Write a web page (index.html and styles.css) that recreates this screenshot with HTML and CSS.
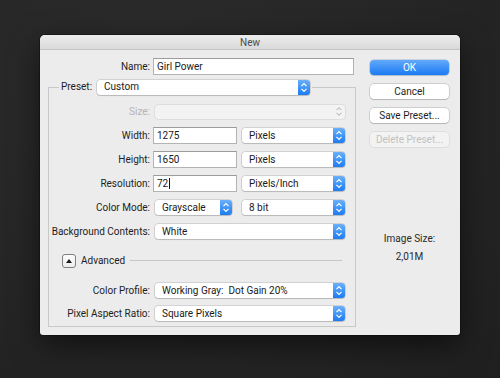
FILE: index.html
```html
<!DOCTYPE html>
<html lang="en">
<head>
    <meta charset="UTF-8">
    <title>New</title>
    <link rel="stylesheet" href="styles.css">
</head>
<body>
<div class="stage">
    <div class="dialog">
        <div class="dialog--title">New</div>

        <div class="dialog--content">
            <div class="dialog--main">

                <div class="row">
                    <span class="label label-name">Name:</span>
                    <div class="field field-name">Girl Power</div>
                </div>

                <div class="group">
                    <div class="group--head">
                        <span class="group--line group--line-left"></span>
                        <span class="group--title">Preset:</span>
                        <div class="popup popup-preset">
                            <span class="popup--value">Custom</span>
                            <span class="popup--stepper"><svg viewBox="0 0 12 15" width="12" height="15"><path d="M3.5 6.2 L6 3.7 L8.5 6.2 M3.5 8.8 L6 11.3 L8.5 8.8"/></svg></span>
                        </div>
                        <span class="group--line"></span>
                    </div>

                    <div class="row row-size">
                        <span class="label label-disabled">Size:</span>
                        <div class="popup popup-full popup-disabled">
                            <span class="popup--value"></span>
                            <span class="popup--stepper"><svg viewBox="0 0 12 15" width="12" height="15"><path d="M3.5 6.2 L6 3.7 L8.5 6.2 M3.5 8.8 L6 11.3 L8.5 8.8"/></svg></span>
                        </div>
                    </div>

                    <div class="row">
                        <span class="label">Width:</span>
                        <div class="field field-num">1275</div>
                        <div class="popup popup-unit">
                            <span class="popup--value">Pixels</span>
                            <span class="popup--stepper"><svg viewBox="0 0 12 15" width="12" height="15"><path d="M3.5 6.2 L6 3.7 L8.5 6.2 M3.5 8.8 L6 11.3 L8.5 8.8"/></svg></span>
                        </div>
                    </div>

                    <div class="row">
                        <span class="label">Height:</span>
                        <div class="field field-num">1650</div>
                        <div class="popup popup-unit">
                            <span class="popup--value">Pixels</span>
                            <span class="popup--stepper"><svg viewBox="0 0 12 15" width="12" height="15"><path d="M3.5 6.2 L6 3.7 L8.5 6.2 M3.5 8.8 L6 11.3 L8.5 8.8"/></svg></span>
                        </div>
                    </div>

                    <div class="row">
                        <span class="label">Resolution:</span>
                        <div class="field field-num">72<span class="caret"></span></div>
                        <div class="popup popup-unit">
                            <span class="popup--value">Pixels/Inch</span>
                            <span class="popup--stepper"><svg viewBox="0 0 12 15" width="12" height="15"><path d="M3.5 6.2 L6 3.7 L8.5 6.2 M3.5 8.8 L6 11.3 L8.5 8.8"/></svg></span>
                        </div>
                    </div>

                    <div class="row">
                        <span class="label">Color Mode:</span>
                        <div class="popup popup-mode">
                            <span class="popup--value">Grayscale</span>
                            <span class="popup--stepper"><svg viewBox="0 0 12 15" width="12" height="15"><path d="M3.5 6.2 L6 3.7 L8.5 6.2 M3.5 8.8 L6 11.3 L8.5 8.8"/></svg></span>
                        </div>
                        <div class="popup popup-unit popup-bits">
                            <span class="popup--value">8 bit</span>
                            <span class="popup--stepper"><svg viewBox="0 0 12 15" width="12" height="15"><path d="M3.5 6.2 L6 3.7 L8.5 6.2 M3.5 8.8 L6 11.3 L8.5 8.8"/></svg></span>
                        </div>
                    </div>

                    <div class="row">
                        <span class="label">Background Contents:</span>
                        <div class="popup popup-full">
                            <span class="popup--value">White</span>
                            <span class="popup--stepper"><svg viewBox="0 0 12 15" width="12" height="15"><path d="M3.5 6.2 L6 3.7 L8.5 6.2 M3.5 8.8 L6 11.3 L8.5 8.8"/></svg></span>
                        </div>
                    </div>

                    <div class="row row-advanced">
                        <span class="disclosure"><span class="disclosure--arrow"></span></span>
                        <span class="advanced--title">Advanced</span>
                        <span class="advanced--line"></span>
                    </div>

                    <div class="row row-profile">
                        <span class="label">Color Profile:</span>
                        <div class="popup popup-full">
                            <span class="popup--value">Working Gray:&nbsp; Dot Gain 20%</span>
                            <span class="popup--stepper"><svg viewBox="0 0 12 15" width="12" height="15"><path d="M3.5 6.2 L6 3.7 L8.5 6.2 M3.5 8.8 L6 11.3 L8.5 8.8"/></svg></span>
                        </div>
                    </div>

                    <div class="row row-aspect">
                        <span class="label">Pixel Aspect Ratio:</span>
                        <div class="popup popup-full">
                            <span class="popup--value">Square Pixels</span>
                            <span class="popup--stepper"><svg viewBox="0 0 12 15" width="12" height="15"><path d="M3.5 6.2 L6 3.7 L8.5 6.2 M3.5 8.8 L6 11.3 L8.5 8.8"/></svg></span>
                        </div>
                    </div>
                </div>
            </div>

            <div class="dialog--side">
                <button class="btn btn-default">OK</button>
                <button class="btn">Cancel</button>
                <button class="btn">Save Preset...</button>
                <button class="btn btn-disabled">Delete Preset...</button>

                <div class="imagesize">
                    <div class="imagesize--label">Image Size:</div>
                    <div class="imagesize--value">2,01M</div>
                </div>
            </div>
        </div>
    </div>
</div>
</body>
</html>
```

FILE: styles.css
```css
*, *:before, *:after {
    box-sizing: border-box;
    padding: 0;
    margin: 0;
}

body {
    background: radial-gradient(ellipse at 30% 20%, #2b2b2b 0%, #252525 60%, #1f1f1f 100%);
    height: 378px;
    overflow: hidden;
    font-family: Roboto, "Liberation Sans", Arial, sans-serif;
    font-size: 10px;
    line-height: 1;
    color: #222;
}

.stage {
    padding: 35px 0 0 40px;
}

.dialog {
    width: 420px;
    height: 300px;
    background: #ececec;
    border-radius: 5px 5px 3px 3px;
    overflow: hidden;
    box-shadow: 0 10px 30px rgba(0, 0, 0, 0.55), 0 0 0 1px rgba(0, 0, 0, 0.3);
}

.dialog--title {
    height: 15px;
    line-height: 15px;
    text-align: center;
    color: #4c4c4c;
    background: linear-gradient(#ececec, #dadada);
    border-bottom: 1px solid #c4c4c4;
}

.dialog--content {
    display: flex;
}

.dialog--main {
    width: 316px;
    padding: 8px 0 0 8px;
}

.row {
    display: flex;
    align-items: center;
    height: 17px;
}

.label {
    flex: none;
    width: 101px;
    text-align: right;
    color: #1e1e1e;
}

.label-name {
    width: 102px;
}

.label-disabled {
    color: #b4b4b4;
}

/* text fields */
.field {
    height: 17px;
    margin-left: 3px;
    padding: 0 3px;
    display: flex;
    align-items: center;
    background: #fff;
    border: 1px solid #b3b3b3;
    border-top-color: #9c9c9c;
    color: #1a1a1a;
}

.field-name {
    width: 201px;
}

.field-num {
    width: 84px;
}

.caret {
    display: inline-block;
    width: 1px;
    height: 11px;
    background: #111;
    margin-left: 1px;
}

/* popup buttons */
.popup {
    height: 15px;
    margin-left: 5px;
    padding-left: 7px;
    display: flex;
    align-items: center;
    background: #fff;
    border-radius: 3px;
    box-shadow: 0 0 0 0.5px rgba(0, 0, 0, 0.22), 0 1px 1px rgba(0, 0, 0, 0.12);
    color: #1a1a1a;
}

.popup--value {
    flex: 1;
    white-space: nowrap;
    overflow: hidden;
}

.popup--stepper {
    flex: none;
    width: 12px;
    height: 15px;
    border-radius: 0 3px 3px 0;
    background: linear-gradient(#6bb0fa, #1c7bf2);
}

.popup--stepper svg {
    display: block;
    fill: none;
    stroke: #fff;
    stroke-width: 1.2;
}

.popup-full {
    width: 190px;
}

.popup-unit {
    width: 103px;
}

.popup-mode {
    width: 77px;
}

.popup-bits {
    margin-left: 10px;
}

.popup-preset {
    width: 213px;
    margin-left: 5px;
}

.popup-disabled {
    height: 14px;
    background: #f3f3f3;
    box-shadow: 0 0 0 0.5px rgba(0, 0, 0, 0.12);
}

.popup-disabled .popup--stepper {
    background: transparent;
}

.popup-disabled .popup--stepper svg {
    stroke: #a8a8a8;
    stroke-width: 1;
}

/* preset group box */
.group {
    margin-top: 12px;
    border: 1px solid #c9c9c9;
    border-top: none;
    padding-bottom: 4px;
    display: flex;
    flex-direction: column;
    gap: 7px;
}

.group--head {
    display: flex;
    align-items: center;
    height: 14px;
    margin: -7px -1px 0 -1px;
}

.group--line {
    flex: 1;
    height: 1px;
    background: #c9c9c9;
    margin-left: 2px;
}

.group--line-left {
    flex: none;
    width: 11px;
    margin: 0 2px 0 0;
}

.group--title {
    color: #1e1e1e;
}

.row-size {
    margin-top: 2px;
}

/* advanced disclosure */
.row-advanced {
    margin-top: 5px;
    padding-left: 13px;
}

.disclosure {
    width: 14px;
    height: 14px;
    border: 1px solid #7f7f7f;
    border-radius: 3px;
    background: linear-gradient(#fbfbfb, #eeeeee);
    display: flex;
    align-items: center;
    justify-content: center;
}

.disclosure--arrow {
    width: 0;
    height: 0;
    border-left: 3px solid transparent;
    border-right: 3px solid transparent;
    border-bottom: 4px solid #1a1a1a;
}

.advanced--title {
    margin-left: 5px;
    color: #1e1e1e;
}

.advanced--line {
    flex: none;
    width: 212px;
    height: 1px;
    background: #c6c6c6;
    margin-left: 5px;
}

.row-profile {
    margin-top: 6px;
}

.row-aspect {
    margin-top: -1px;
}

/* right column */
.dialog--side {
    width: 79px;
    margin-left: 14px;
    padding-top: 10px;
    display: flex;
    flex-direction: column;
}

.btn {
    height: 15px;
    width: 79px;
    margin-bottom: 9px;
    border: none;
    border-radius: 4px;
    background: #fff;
    box-shadow: 0 0 0 0.5px rgba(0, 0, 0, 0.25), 0 1px 1px rgba(0, 0, 0, 0.12);
    font-family: inherit;
    font-size: 10px;
    line-height: 15px;
    color: #1e1e1e;
    text-align: center;
}

.btn-default {
    background: linear-gradient(#63a9fa, #1b7bf3);
    color: #fff;
    box-shadow: 0 0 0 0.5px rgba(0, 60, 160, 0.3), 0 1px 1px rgba(0, 0, 0, 0.12);
}

.btn-disabled {
    background: #f3f3f3;
    color: #c2c2c2;
    box-shadow: 0 0 0 0.5px rgba(0, 0, 0, 0.12);
}

.imagesize {
    margin-top: 78px;
    text-align: center;
    color: #2a2a2a;
}

.imagesize--value {
    margin-top: 8px;
}
```
